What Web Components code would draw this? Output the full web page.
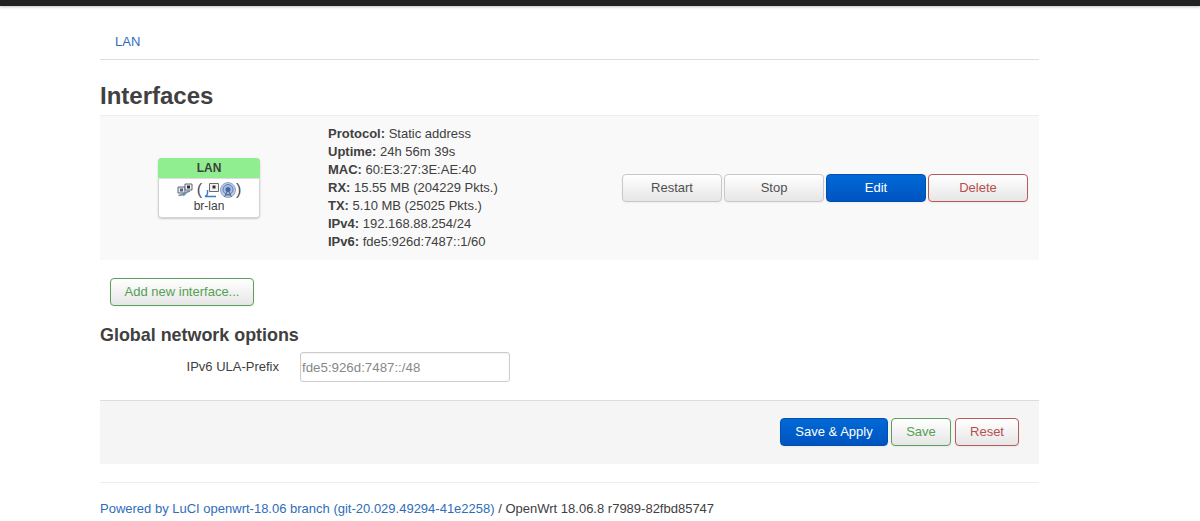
<!DOCTYPE html>
<html>
<head>
<meta charset="utf-8">
<title>Interfaces</title>
<style>
  html, body { margin: 0; background: #fff; }
  body { font: 13px/18px "Liberation Sans", Arial, sans-serif; color: #404040; overflow: hidden; }
</style>
</head>
<body>
<luci-header></luci-header>
<luci-page>
  <luci-tabs slot="tabs"></luci-tabs>
  <h-title slot="title" size="24">Interfaces</h-title>
  <iface-row slot="row"></iface-row>
  <div slot="add"><luci-btn kind="add" w="144">Add new interface...</luci-btn></div>
  <h-title slot="sub" size="18">Global network options</h-title>
  <ula-field slot="field"></ula-field>
  <form-actions slot="actions"></form-actions>
  <luci-footer slot="footer"></luci-footer>
</luci-page>

<script>
class LuciHeader extends HTMLElement {
  constructor() {
    super();
    this.attachShadow({ mode: 'open' });
    this.shadowRoot.innerHTML = `
      <style>
        :host { display: block; height: 6px; background: #222; box-shadow: 0 1px 3px rgba(0,0,0,.25); }
      </style>
    `;
  }
}

class LuciPage extends HTMLElement {
  constructor() {
    super();
    this.attachShadow({ mode: 'open' });
    this.shadowRoot.innerHTML = `
      <style>
        :host { display: block; width: 939px; margin-left: 100px; }
        .add { padding: 18px 0 0 10px; }
        .sub { padding-top: 18px; }
      </style>
      <slot name="tabs"></slot>
      <slot name="title"></slot>
      <slot name="row"></slot>
      <div class="add"><slot name="add"></slot></div>
      <div class="sub"><slot name="sub"></slot></div>
      <slot name="field"></slot>
      <slot name="actions"></slot>
      <slot name="footer"></slot>
    `;
  }
}

class LuciTabs extends HTMLElement {
  constructor() {
    super();
    this.attachShadow({ mode: 'open' });
    this.shadowRoot.innerHTML = `
      <style>
        :host { display: block; height: 26px; padding: 27px 0 0 15px; border-bottom: 1px solid #ddd; }
        a { color: #2f6dbb; text-decoration: none; font-size: 13px; line-height: 18px; }
      </style>
      <a href="#">LAN</a>
    `;
  }
}

class HTitle extends HTMLElement {
  constructor() {
    super();
    this.attachShadow({ mode: 'open' });
    this.shadowRoot.innerHTML = `
      <style>
        :host { display: block; font-weight: bold; color: #404040; }
        :host([size="24"]) { font-size: 24px; line-height: 30px; padding: 21px 0 4px; }
        :host([size="18"]) { font-size: 17.9px; line-height: 22px; }
      </style>
      <slot></slot>
    `;
  }
}

class StatusBadge extends HTMLElement {
  constructor() {
    super();
    this.attachShadow({ mode: 'open' });
    this.shadowRoot.innerHTML = `
      <style>
        :host { display: block; box-sizing: border-box; width: 102px; height: 60px; background: #fff; border-radius: 4px; box-shadow: inset 0 0 0 1px #d4d4d4, 0 1px 2px rgba(0,0,0,.2); overflow: hidden; text-align: center; font-size: 12px; line-height: 14px; }
        .name { height: 20px; background: #90ee90; font-weight: bold; color: #404040; line-height: 21px; font-size: 12px; box-shadow: 0 1px 0 #ddd; }
        .icons { display: flex; justify-content: center; align-items: center; height: 16px; padding-top: 4px; color: #404a5c; font-size: 16px; line-height: 16px; }
        .dev { padding-top: 1px; color: #404040; }
        svg { display: block; width: 16px; height: 16px; flex: none; }
        .paren { margin: 0 2px 0 4px; }
      </style>
      <div class="name">LAN</div>
      <div class="icons">
        <svg viewBox="0 0 16 16">
          <path d="M1 5h7v6H1z" fill="#e4e8ee" stroke="#5c6470"/><path d="M3 6.500h3v3H3z" fill="#4b6590"/>
          <path d="M8 2h7v6H8z" fill="#f2f2f2" stroke="#5c6470"/><path d="M10 3.500h3v3h-3z" fill="#2e2e2e"/>
          <path d="M1.500 13.500l5-1M6 11l1 2 3-3 3-1" stroke="#6c87ad" stroke-width="1.6" fill="none"/>
        </svg>
        <span class="paren">(</span>
        <svg viewBox="0 0 16 16">
          <path d="M5.500 1.500h9v8h-9z" fill="#f2f2f2" stroke="#6a6a6a"/><path d="M8.500 3.500h3v3h-3z" fill="#2e2e2e"/>
          <path d="M3.500 8v3.500q0 2-2.500 3h11" stroke="#3d7bc8" stroke-width="1.500" fill="none"/>
        </svg>
        <svg viewBox="0 0 16 16">
          <circle cx="8" cy="8" r="7.500" fill="#bccbe6" stroke="#8fa3c8"/>
          <circle cx="8" cy="7.500" r="5" fill="#a9bde0" stroke="#5a7db5"/>
          <circle cx="8" cy="7.500" r="2.500" fill="#3f66a5"/>
          <path d="M4.500 15L8 8l3.500 7M5.500 13h5" stroke="#55657f" fill="none"/>
        </svg>
        <span>)</span>
      </div>
      <div class="dev"><slot></slot></div>
    `;
  }
}

class LuciBtn extends HTMLElement {
  constructor() {
    super();
    this.attachShadow({ mode: 'open' });
    this.shadowRoot.innerHTML = `
      <style>
        :host { display: inline-block; box-sizing: border-box; height: 28px; border: 1px solid #c8c8c8; border-radius: 4px; background: linear-gradient(#fff, #e6e6e6); color: #505050; font-size: 13px; line-height: 26px; text-align: center; box-shadow: 0 1px 2px rgba(0,0,0,.05); vertical-align: top; }
        :host([kind="primary"]) { background: linear-gradient(#0069d6, #0054c0); border-color: #0050b0; color: #fff; }
        :host([kind="add"]), :host([kind="save"]) { border-color: #5a9f5a; color: #55a055; }
        :host([kind="del"]) { border-color: #b95a58; color: #b5504e; }
      </style>
      <slot></slot>
    `;
    this.style.width = this.getAttribute('w') + 'px';
  }
}

class IfaceRow extends HTMLElement {
  constructor() {
    super();
    this.attachShadow({ mode: 'open' });
    this.shadowRoot.innerHTML = `
      <style>
        :host { display: grid; grid-template-columns: 228px 294px 1fr; align-items: center; height: 145px; background: #f9f9f9; border-top: 1px solid #eee; box-sizing: border-box; }
        .badge { justify-self: start; margin-left: 58px; }
        .info { line-height: 18px; white-space: nowrap; }
        .btns { display: flex; gap: 2px; margin-top: -1px; }
      </style>
      <div class="badge"><status-badge>br-lan</status-badge></div>
      <div class="info">
        <b>Protocol:</b> Static address<br>
        <b>Uptime:</b> 24h 56m 39s<br>
        <b>MAC:</b> 60:E3:27:3E:AE:40<br>
        <b>RX:</b> 15.55 MB (204229 Pkts.)<br>
        <b>TX:</b> 5.10 MB (25025 Pkts.)<br>
        <b>IPv4:</b> 192.168.88.254/24<br>
        <b>IPv6:</b> fde5:926d:7487::1/60
      </div>
      <div class="btns">
        <luci-btn w="100">Restart</luci-btn>
        <luci-btn w="100">Stop</luci-btn>
        <luci-btn kind="primary" w="100">Edit</luci-btn>
        <luci-btn kind="del" w="100">Delete</luci-btn>
      </div>
    `;
  }
}

class UlaField extends HTMLElement {
  constructor() {
    super();
    this.attachShadow({ mode: 'open' });
    this.shadowRoot.innerHTML = `
      <style>
        :host { display: flex; align-items: center; padding: 6px 0 18px; font-size: 13px; }
        label { width: 179px; text-align: right; }
        .input { box-sizing: border-box; width: 210px; height: 30px; margin-left: 21px; padding-left: 1px; border: 1px solid #ccc; border-radius: 3px; background: #fff; color: #888; line-height: 30px; font-size: 13.3px; box-shadow: inset 0 1px 2px rgba(0,0,0,.06); }
      </style>
      <label>IPv6 ULA-Prefix</label>
      <div class="input">fde5:926d:7487::/48</div>
    `;
  }
}

class FormActions extends HTMLElement {
  constructor() {
    super();
    this.attachShadow({ mode: 'open' });
    this.shadowRoot.innerHTML = `
      <style>
        :host { display: flex; justify-content: flex-end; align-items: center; height: 64px; padding: 0 20px 0 0; background: #f5f5f5; border-top: 1px solid #ddd; box-sizing: border-box; }
        luci-btn { margin-top: -2px; }
        .save { margin: -2px 4px 0 3px; }
      </style>
      <luci-btn kind="primary" w="108">Save &amp; Apply</luci-btn>
      <luci-btn class="save" kind="save" w="60">Save</luci-btn>
      <luci-btn kind="del" w="64">Reset</luci-btn>
    `;
  }
}

class LuciFooter extends HTMLElement {
  constructor() {
    super();
    this.attachShadow({ mode: 'open' });
    this.shadowRoot.innerHTML = `
      <style>
        :host { display: block; margin-top: 18px; padding-top: 17px; border-top: 1px solid #eee; font-size: 13px; line-height: 18px; white-space: nowrap; }
        a { color: #2f6dbb; text-decoration: none; }
      </style>
      <a href="#">Powered by LuCI openwrt-18.06 branch (git-20.029.49294-41e2258)</a> / OpenWrt 18.06.8 r7989-82fbd85747
    `;
  }
}

customElements.define('luci-btn', LuciBtn);
customElements.define('luci-header', LuciHeader);
customElements.define('luci-page', LuciPage);
customElements.define('luci-tabs', LuciTabs);
customElements.define('h-title', HTitle);
customElements.define('status-badge', StatusBadge);
customElements.define('iface-row', IfaceRow);
customElements.define('ula-field', UlaField);
customElements.define('form-actions', FormActions);
customElements.define('luci-footer', LuciFooter);
</script>
</body>
</html>
